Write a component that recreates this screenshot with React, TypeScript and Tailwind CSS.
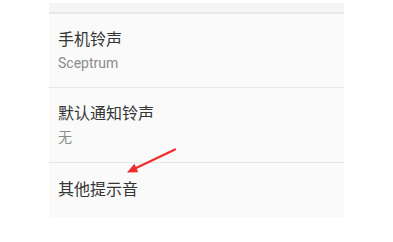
const cjk = { fontFamily: 'Roboto, "Noto Sans CJK SC", sans-serif' }

function Row({ title, subtitle, h }: { title: string; subtitle?: string; h: string }) {
  return (
    <div className={`flex flex-col justify-center px-[9px] border-b border-[#e6e6e6] ${h}`}>
      <div className="text-[16px] leading-[22px] text-[#353535]">{title}</div>
      {subtitle && <div className="mt-[2px] text-[14px] leading-[20px] text-[#8c8c8c]">{subtitle}</div>}
    </div>
  )
}

export default function App() {
  return (
    <div className="relative h-[242px] w-[393px] overflow-hidden bg-white pl-[49px] pt-[3px]" style={cjk}>
      <div className="w-[295px] bg-[#fafafa]">
        <div className="h-[11px] border-b-2 border-[#e8e8e8] bg-[#f5f5f5]" />
        <Row title="手机铃声" subtitle="Sceptrum" h="h-[74px]" />
        <Row title="默认通知铃声" subtitle="无" h="h-[75px]" />
        <div className="flex h-[54px] items-center px-[9px] text-[16px] text-[#353535]">其他提示音</div>
      </div>
      <svg
        className="absolute left-[120px] top-[140px]"
        width="64"
        height="40"
        viewBox="120 140 64 40"
      >
        <line x1="175" y1="149.5" x2="134" y2="169" stroke="#f02c2c" strokeWidth="2.2" strokeLinecap="round" />
        <polygon points="127,172.5 138.3,172.2 134.4,163.8" fill="#f02c2c" />
      </svg>
    </div>
  )
}
